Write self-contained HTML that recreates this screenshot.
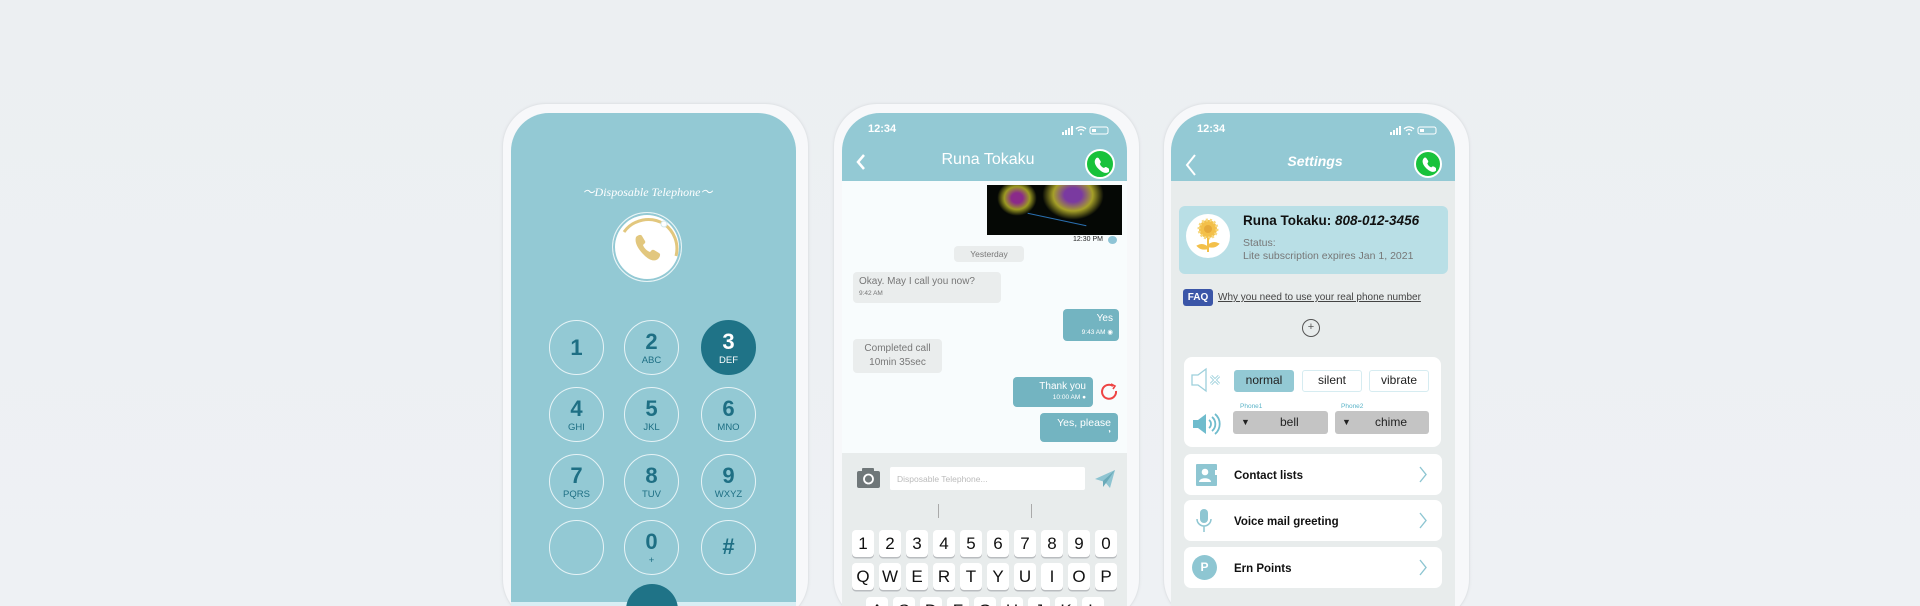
<!DOCTYPE html>
<html><head><meta charset="utf-8"><style>
*{margin:0;padding:0;box-sizing:border-box}
html,body{width:1920px;height:606px;overflow:hidden}
body{font-family:"Liberation Sans",sans-serif}
#w{position:relative;width:1920px;height:606px;overflow:hidden;background:linear-gradient(#eceff2,#eef1f4)}
.a{position:absolute}
.frame{position:absolute;top:103px;width:307px;height:520px;border-radius:44px;background:#f7f8fa;border:1px solid #e2e5e8;box-shadow:0 0 3px rgba(0,0,0,.05)}
.screen{position:absolute;top:113px;height:500px;border-radius:38px 38px 0 0;overflow:hidden}
.key{position:absolute;width:55px;height:55px;border-radius:50%;border:1.5px solid #e6f3f6;color:#1e6f84;text-align:center;font-weight:bold}
.key b{display:block;font-size:22px;margin-top:10px;line-height:22px}
.key i{display:block;font-style:normal;font-size:9.5px;font-weight:normal;margin-top:2px}
.hdr{position:absolute;left:0;top:0;width:100%;height:68px;background:#93c9d4}
.st{position:absolute;top:10px;left:26px;color:#fff;font-weight:bold;font-size:11px}
.green{position:absolute;width:30px;height:30px;border-radius:50%;background:#18c23b;border:2px solid #fff}
.bub{position:absolute;border-radius:4px;font-size:10px}
.k{position:absolute;width:22px;height:27px;background:#fff;border-radius:4px;box-shadow:0 1.5px 0 #b9bcbf;text-align:center;font-size:17px;line-height:27px;color:#111}
.card{position:absolute;background:#fff;border-radius:8px}
.btn{position:absolute;height:22px;border:1.5px solid #d6ecf1;border-radius:3px;text-align:center;font-size:12px;line-height:19px;color:#222}
.sel{position:absolute;height:23px;background:#c4c4c4;border-radius:3px;font-size:12px;line-height:23px;color:#222}
.row{position:absolute;left:1184px;width:258px;height:41px;background:#fff;border-radius:7px}
.row span{position:absolute;left:50px;top:16px;font-size:11.5px;font-weight:bold;color:#111}
.chev{position:absolute;right:14px;top:12px;width:10px;height:17px}
</style></head><body><div id="w">

<!-- phone 1 -->
<div class="frame" style="left:502px"></div>
<div class="screen" style="left:511px;width:285px;height:489px;background:#93c9d4"></div>
<div class="a" style="left:511px;top:602px;width:285px;height:4px;background:#d8eef4"></div>
<div class="a" style="left:580px;top:183px;width:135px;text-align:center;font-family:'Liberation Serif',serif;font-style:italic;color:#fff;font-size:12px">〜Disposable Telephone〜</div>
<div class="a" style="left:612px;top:212px;width:70px;height:70px;border-radius:50%;border:1px solid #e8f4f6;background:#fff;box-shadow:0 0 0 2px #93c9d4 inset"></div>
<svg class="a" style="left:612px;top:212px" width="70" height="70" viewBox="0 0 70 70">
<path d="M12 20 A30 30 0 0 1 52 12 A30 30 0 0 1 64 44" fill="none" stroke="#e2c77e" stroke-width="3"/>
<circle cx="52" cy="12" r="3" fill="#fff" stroke="#d5e8ec"/>
<path d="M24 25c2-2 5-3 6-1l3 5c1 2-1 3-2 4 1 3 4 6 7 7 1-1 2-3 4-2l5 3c2 1 1 4-1 6-4 3-9 1-14-4s-10-12-8-18z" fill="#e2c77e"/>
</svg>
<div class="key" style="left:549px;top:320px"><b style="margin-top:16px">1</b></div>
<div class="key" style="left:624px;top:320px"><b>2</b><i>ABC</i></div>
<div class="key" style="left:701px;top:320px;background:#1f7387;border-color:#1f7387;color:#fff"><b>3</b><i>DEF</i></div>
<div class="key" style="left:549px;top:387px"><b>4</b><i>GHI</i></div>
<div class="key" style="left:624px;top:387px"><b>5</b><i>JKL</i></div>
<div class="key" style="left:701px;top:387px"><b>6</b><i>MNO</i></div>
<div class="key" style="left:549px;top:454px"><b>7</b><i>PQRS</i></div>
<div class="key" style="left:624px;top:454px"><b>8</b><i>TUV</i></div>
<div class="key" style="left:701px;top:454px"><b>9</b><i>WXYZ</i></div>
<div class="key" style="left:549px;top:520px"></div>
<div class="key" style="left:624px;top:520px"><b>0</b><i>+</i></div>
<div class="key" style="left:701px;top:520px"><b style="margin-top:15px">#</b></div>
<div class="a" style="left:626px;top:584px;width:52px;height:52px;border-radius:50%;background:#1f7387"></div>

<!-- phone 2 -->
<div class="frame" style="left:833px"></div>
<div class="screen" style="left:842px;width:285px;background:#f8fcfd">
  <div class="hdr"></div>
  <div class="st">12:34</div>
  <div class="a" style="left:0;top:340px;width:285px;height:160px;background:#e8ecec"></div>
</div>
<svg class="a" style="left:1062px;top:126px" width="52" height="10"><rect x="0" y="6" width="2" height="3" fill="#fff"/><rect x="3" y="4" width="2" height="5" fill="#fff"/><rect x="6" y="2" width="2" height="7" fill="#fff"/><rect x="9" y="0" width="2" height="9" fill="#fff"/><path d="M14 3a7 7 0 0 1 10 0M16 5a4 4 0 0 1 6 0" stroke="#fff" fill="none" stroke-width="1.3"/><circle cx="19" cy="8" r="1" fill="#fff"/><rect x="28" y="1" width="18" height="7" rx="2" fill="none" stroke="#fff"/><rect x="30" y="3" width="4" height="3" fill="#fff"/></svg>
<svg class="a" style="left:855px;top:153px" width="12" height="18"><path d="M9 2L3 9l6 7" stroke="#fff" stroke-width="2.5" fill="none"/></svg>
<div class="a" style="left:900px;top:151px;width:176px;text-align:center;color:#fff;font-size:16px">Runa Tokaku</div>
<div class="green" style="left:1085px;top:149px"></div>
<svg class="a" style="left:1092px;top:156px" width="17" height="17" viewBox="0 0 24 24"><path d="M6 3c1-1 3-1 4 1l2 3c1 2 0 3-1 4 1 3 3 5 6 6 1-1 2-2 4-1l3 2c1 1 1 3 0 4-4 4-10 1-15-4S2 7 6 3z" fill="#fff"/></svg>
<div class="a" style="left:987px;top:185px;width:135px;height:50px;background:#050805;overflow:hidden">
  <div class="a" style="left:10px;top:-5px;width:40px;height:36px;border-radius:50%;background:radial-gradient(#8a2a8a 20%,#9c9a22 45%,transparent 70%)"></div>
  <div class="a" style="left:55px;top:-15px;width:62px;height:50px;border-radius:50%;background:radial-gradient(#7a3aa0 20%,#a6a028 45%,transparent 70%)"></div>
  <div class="a" style="left:40px;top:34px;width:60px;height:1px;background:#2a6fb0;transform:rotate(12deg)"></div>
</div>
<div class="a" style="left:1073px;top:236px;font-size:7px;color:#222">12:30 PM</div>
<div class="a" style="left:1108px;top:236px;width:9px;height:8px;border-radius:50%;background:#8ec4d6"></div>
<div class="bub" style="left:954px;top:246px;width:70px;height:16px;background:#eaeded;text-align:center;line-height:16px;color:#777;font-size:8.5px">Yesterday</div>
<div class="bub" style="left:853px;top:272px;width:148px;height:31px;background:#eaeded;color:#777;padding:4px 6px">Okay. May I call you now?<div style="font-size:6.5px;margin-top:3px">9:42 AM</div></div>
<div class="bub" style="left:1063px;top:309px;width:56px;height:32px;background:#73b4c1;color:#fff;text-align:right;padding:4px 6px">Yes<div style="font-size:6.5px;margin-top:4px">9:43 AM ◉</div></div>
<div class="bub" style="left:853px;top:339px;width:89px;height:34px;background:#eaeded;color:#777;text-align:center;padding:3px 0;line-height:14px">Completed call<br>10min 35sec</div>
<div class="bub" style="left:1013px;top:377px;width:80px;height:30px;background:#73b4c1;color:#fff;text-align:right;padding:4px 7px">Thank you<div style="font-size:6.5px;margin-top:2px">10:00 AM ●</div></div>
<svg class="a" style="left:1100px;top:383px" width="18" height="18"><path d="M13 3a7 7 0 1 0 3 5" stroke="#e44" stroke-width="2" fill="none"/><path d="M11 1l4 2-2 3" stroke="#e44" stroke-width="1.6" fill="none"/></svg>
<div class="bub" style="left:1040px;top:413px;width:78px;height:29px;background:#73b4c1;color:#fff;text-align:right;padding:4px 7px;font-size:10.5px">Yes, please<div style="font-size:6px">◑</div></div>
<svg class="a" style="left:857px;top:467px" width="24" height="22"><rect x="0" y="4" width="23" height="17" rx="2" fill="#6f7779"/><rect x="5" y="1" width="12" height="5" rx="1" fill="#6f7779"/><circle cx="11.5" cy="12" r="4.5" fill="none" stroke="#fff" stroke-width="1.8"/></svg>
<div class="a" style="left:890px;top:467px;width:195px;height:23px;background:#fff;border-radius:2px;font-size:8.5px;color:#bbb;padding:7px 7px">Disposable Telephone...</div>
<svg class="a" style="left:1094px;top:469px" width="22" height="20"><path d="M1 10L21 1 16 19 11 13z" fill="#8ec4d1"/><path d="M21 1L9 12v6l3-4" fill="#6aaab9"/></svg>
<div class="a" style="left:938px;top:504px;width:1px;height:14px;background:#aaa"></div>
<div class="a" style="left:1031px;top:504px;width:1px;height:14px;background:#aaa"></div>
<div class="k" style="left:852px;top:530px">1</div><div class="k" style="left:879px;top:530px">2</div><div class="k" style="left:906px;top:530px">3</div><div class="k" style="left:933px;top:530px">4</div><div class="k" style="left:960px;top:530px">5</div><div class="k" style="left:987px;top:530px">6</div><div class="k" style="left:1014px;top:530px">7</div><div class="k" style="left:1041px;top:530px">8</div><div class="k" style="left:1068px;top:530px">9</div><div class="k" style="left:1095px;top:530px">0</div>
<div class="k" style="left:852px;top:563px">Q</div><div class="k" style="left:879px;top:563px">W</div><div class="k" style="left:906px;top:563px">E</div><div class="k" style="left:933px;top:563px">R</div><div class="k" style="left:960px;top:563px">T</div><div class="k" style="left:987px;top:563px">Y</div><div class="k" style="left:1014px;top:563px">U</div><div class="k" style="left:1041px;top:563px">I</div><div class="k" style="left:1068px;top:563px">O</div><div class="k" style="left:1095px;top:563px">P</div>
<div class="k" style="left:866px;top:597px">A</div><div class="k" style="left:893px;top:597px">S</div><div class="k" style="left:920px;top:597px">D</div><div class="k" style="left:947px;top:597px">F</div><div class="k" style="left:974px;top:597px">G</div><div class="k" style="left:1001px;top:597px">H</div><div class="k" style="left:1028px;top:597px">J</div><div class="k" style="left:1055px;top:597px">K</div><div class="k" style="left:1082px;top:597px">L</div>

<!-- phone 3 -->
<div class="frame" style="left:1163px"></div>
<div class="screen" style="left:1171px;width:284px;background:#e8ecec">
  <div class="hdr"></div>
  <div class="st">12:34</div>
</div>
<svg class="a" style="left:1390px;top:126px" width="52" height="10"><rect x="0" y="6" width="2" height="3" fill="#fff"/><rect x="3" y="4" width="2" height="5" fill="#fff"/><rect x="6" y="2" width="2" height="7" fill="#fff"/><rect x="9" y="0" width="2" height="9" fill="#fff"/><path d="M14 3a7 7 0 0 1 10 0M16 5a4 4 0 0 1 6 0" stroke="#fff" fill="none" stroke-width="1.3"/><circle cx="19" cy="8" r="1" fill="#fff"/><rect x="28" y="1" width="18" height="7" rx="2" fill="none" stroke="#fff"/><rect x="30" y="3" width="4" height="3" fill="#fff"/></svg>
<svg class="a" style="left:1185px;top:153px" width="12" height="24"><path d="M10 2L2 12l8 10" stroke="#fff" stroke-width="2" fill="none"/></svg>
<div class="a" style="left:1255px;top:153px;width:120px;text-align:center;color:#fff;font-size:14px;font-weight:bold;font-style:italic">Settings</div>
<div class="green" style="left:1414px;top:150px;width:28px;height:28px"></div>
<svg class="a" style="left:1420px;top:156px" width="16" height="16" viewBox="0 0 24 24"><path d="M6 3c1-1 3-1 4 1l2 3c1 2 0 3-1 4 1 3 3 5 6 6 1-1 2-2 4-1l3 2c1 1 1 3 0 4-4 4-10 1-15-4S2 7 6 3z" fill="#fff"/></svg>
<div class="a" style="left:1179px;top:206px;width:269px;height:68px;background:#b9dfe6;border-radius:6px"></div>
<div class="a" style="left:1186px;top:214px;width:44px;height:44px;border-radius:50%;background:#fff"></div>
<svg class="a" style="left:1192px;top:216px" width="32" height="40"><circle cx="16" cy="13" r="9" fill="#f3c04a"/><circle cx="16" cy="13" r="9" fill="none" stroke="#f7d77c" stroke-width="3" stroke-dasharray="2 2"/><circle cx="16" cy="13" r="4" fill="#e5a93a"/><path d="M16 22v14M16 32c-4-4-8-3-10-2 3 3 7 3 10 2M16 30c4-4 8-3 10-2-3 3-7 3-10 2" stroke="#f3c04a" stroke-width="2" fill="#f3c04a"/></svg>
<div class="a" style="left:1243px;top:213px;font-size:13.5px;font-weight:bold;color:#111">Runa Tokaku: <i>808-012-3456</i></div>
<div class="a" style="left:1243px;top:237px;font-size:10.5px;color:#777;line-height:13px">Status:<br>Lite subscription expires Jan 1, 2021</div>
<div class="a" style="left:1183px;top:289px;width:30px;height:17px;background:#3b56a8;border-radius:3px;color:#fff;font-size:10px;font-weight:bold;text-align:center;line-height:17px">FAQ</div>
<div class="a" style="left:1218px;top:292px;font-size:10px;color:#444;text-decoration:underline">Why you need to use your real phone number</div>
<div class="a" style="left:1302px;top:319px;width:18px;height:18px;border-radius:50%;border:1.3px solid #555;text-align:center;font-size:11px;line-height:15px;color:#555">+</div>
<div class="card" style="left:1184px;top:357px;width:257px;height:90px"></div>
<svg class="a" style="left:1190px;top:367px" width="34" height="26"><path d="M2 8h6l8-6v22l-8-6H2z" fill="none" stroke="#9dd0dc" stroke-width="1.3"/><path d="M21 9l8 8M29 9l-8 8" stroke="#9dd0dc" stroke-width="3" /><path d="M21 9l8 8M29 9l-8 8" stroke="#fff" stroke-width="1.2"/></svg>
<div class="btn" style="left:1234px;top:370px;width:60px;background:#93c9d4;border-color:#93c9d4">normal</div>
<div class="btn" style="left:1302px;top:370px;width:60px">silent</div>
<div class="btn" style="left:1369px;top:370px;width:60px">vibrate</div>
<svg class="a" style="left:1192px;top:412px" width="30" height="24"><path d="M1 8h5l8-6v20l-8-6H1z" fill="#6fbccd"/><path d="M17 8a5 5 0 0 1 0 8M20 5a9 9 0 0 1 0 14M23 2a13 13 0 0 1 0 20" stroke="#6fbccd" stroke-width="1.8" fill="none"/></svg>
<div class="a" style="left:1240px;top:403px;font-size:6.5px;color:#5cb4c8">Phone1</div>
<div class="a" style="left:1341px;top:403px;font-size:6.5px;color:#5cb4c8">Phone2</div>
<div class="sel" style="left:1233px;top:411px;width:95px"><span style="position:absolute;left:8px;font-size:9px">▼</span><span style="position:absolute;left:47px">bell</span></div>
<div class="sel" style="left:1335px;top:411px;width:94px"><span style="position:absolute;left:7px;font-size:9px">▼</span><span style="position:absolute;left:40px">chime</span></div>
<div class="row" style="top:454px"><div class="a" style="left:12px;top:10px;width:21px;height:22px;background:#8ec6d2;border-radius:1px"></div><svg class="a" style="left:14px;top:13px" width="20" height="18"><circle cx="7" cy="5" r="3.3" fill="#fff"/><path d="M1 15c0-5 12-5 12 0z" fill="#fff"/><rect x="17" y="3" width="2" height="5" fill="#fff"/></svg><span>Contact lists</span><svg class="chev" viewBox="0 0 10 17"><path d="M2 1l6 7.5L2 16" stroke="#8ec6d2" stroke-width="1.4" fill="none"/></svg></div>
<div class="row" style="top:500px"><svg class="a" style="left:12px;top:8px" width="16" height="26"><rect x="4" y="1" width="8" height="14" rx="4" fill="#8ec6d2"/><path d="M1 11a7 7 0 0 0 14 0M8 18v6" stroke="#8ec6d2" stroke-width="1.5" fill="none"/></svg><span>Voice mail greeting</span><svg class="chev" viewBox="0 0 10 17"><path d="M2 1l6 7.5L2 16" stroke="#8ec6d2" stroke-width="1.4" fill="none"/></svg></div>
<div class="row" style="top:547px"><div class="a" style="left:8px;top:8px;width:25px;height:25px;border-radius:50%;background:#8ec6d2;color:#fff;font-weight:bold;font-size:12px;text-align:center;line-height:25px">P</div><span>Ern Points</span><svg class="chev" viewBox="0 0 10 17"><path d="M2 1l6 7.5L2 16" stroke="#8ec6d2" stroke-width="1.4" fill="none"/></svg></div>
</div></body></html>
